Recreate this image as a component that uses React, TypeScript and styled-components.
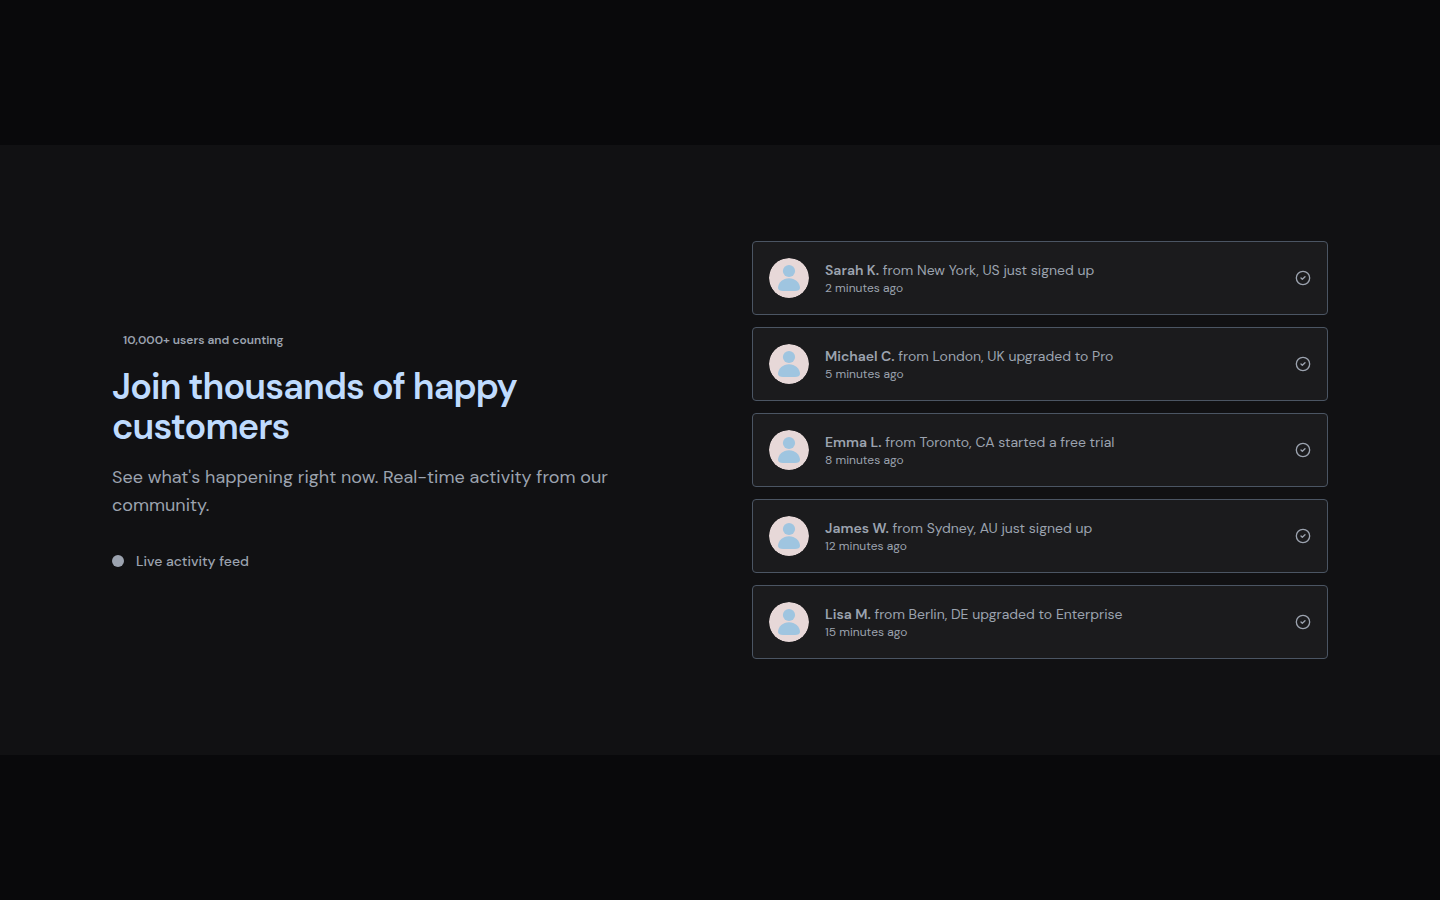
import React from "react";
import styled, { createGlobalStyle } from "styled-components";
import { CircleCheck } from "lucide-react";

const GlobalStyle = createGlobalStyle`
  *, *::before, *::after { box-sizing: border-box; }
  body {
    margin: 0;
    background: #09090b;
    color: #9ca3af;
    font-family: "DM Sans", "Open Sans", sans-serif;
    font-size: 14px;
    line-height: 20px;
  }
`;

const Page = styled.main`
  display: flex;
  flex-direction: column;
  justify-content: center;
  min-height: 100vh;
`;

const Band = styled.section`
  padding: 96px 0;
  background: #111113;
`;

const Container = styled.div`
  display: grid;
  grid-template-columns: 1fr 1fr;
  align-items: center;
  gap: 64px;
  max-width: 1280px;
  margin: 0 auto;
  padding: 0 32px;

  @media (max-width: 900px) {
    grid-template-columns: 1fr;
  }
`;

const Intro = styled.div`
  display: flex;
  flex-direction: column;
  align-items: flex-start;
  gap: 16px;
`;

const Badge = styled.span`
  padding: 2px 10px;
  border: 1px solid transparent;
  border-radius: 4px;
  font-size: 12px;
  font-weight: 600;
  line-height: 16px;
`;

const Title = styled.h2`
  margin: 0;
  color: #bfdbfe;
  font-size: 36px;
  font-weight: 600;
  line-height: 40px;
  letter-spacing: -0.025em;
`;

const Lead = styled.p`
  margin: 0;
  font-size: 18px;
  line-height: 28px;
`;

const LiveStatus = styled.div`
  display: flex;
  align-items: center;
  gap: 12px;
  margin-top: 16px;
  font-weight: 500;
`;

const LiveDot = styled.span`
  width: 12px;
  height: 12px;
  border-radius: 50%;
  background: #9ca3af;
`;

const Feed = styled.ul`
  display: grid;
  gap: 12px;
  margin: 0;
  padding: 0;
  list-style: none;
`;

const Card = styled.li`
  display: flex;
  align-items: center;
  gap: 16px;
  padding: 16px;
  border: 1px solid #4b5563;
  border-radius: 4px;
  background: #1b1b1d;
`;

const AvatarImage = styled.svg`
  flex: none;
  width: 40px;
  height: 40px;
  border-radius: 50%;
`;

const CardBody = styled.div`
  flex: 1;
  min-width: 0;
`;

const Message = styled.p`
  margin: 0;
`;

const Name = styled.strong`
  font-weight: 600;
`;

const Time = styled.p`
  margin: 0;
  font-size: 12px;
  line-height: 16px;
`;

const Check = styled(CircleCheck)`
  flex: none;
  width: 16px;
  height: 16px;
`;

const activities = [
  { name: "Sarah K.", action: "from New York, US just signed up", time: "2 minutes ago" },
  { name: "Michael C.", action: "from London, UK upgraded to Pro", time: "5 minutes ago" },
  { name: "Emma L.", action: "from Toronto, CA started a free trial", time: "8 minutes ago" },
  { name: "James W.", action: "from Sydney, AU just signed up", time: "12 minutes ago" },
  { name: "Lisa M.", action: "from Berlin, DE upgraded to Enterprise", time: "15 minutes ago" },
];

function Avatar() {
  return (
    <AvatarImage viewBox="0 0 40 40" aria-hidden="true">
      <circle cx="20" cy="20" r="20" fill="#e7d8d8" />
      <circle cx="20" cy="13" r="6.1" fill="#9fc5e0" />
      <path
        d="M9 30C9 24.500 14 20.200 20 20.200S31 24.500 31 30c0 2-2 3-5 3H14c-3 0-5-1-5-3z"
        fill="#9fc5e0"
      />
    </AvatarImage>
  );
}

export default function App() {
  return (
    <Page>
      <GlobalStyle />
      <Band>
        <Container>
          <Intro>
            <Badge>10,000+ users and counting</Badge>
            <Title>Join thousands of happy customers</Title>
            <Lead>See what's happening right now. Real-time activity from our community.</Lead>
            <LiveStatus>
              <LiveDot />
              <span>Live activity feed</span>
            </LiveStatus>
          </Intro>
          <Feed>
            {activities.map((item) => (
              <Card key={item.name}>
                <Avatar />
                <CardBody>
                  <Message>
                    <Name>{item.name}</Name> {item.action}
                  </Message>
                  <Time>{item.time}</Time>
                </CardBody>
                <Check aria-hidden="true" />
              </Card>
            ))}
          </Feed>
        </Container>
      </Band>
    </Page>
  );
}
